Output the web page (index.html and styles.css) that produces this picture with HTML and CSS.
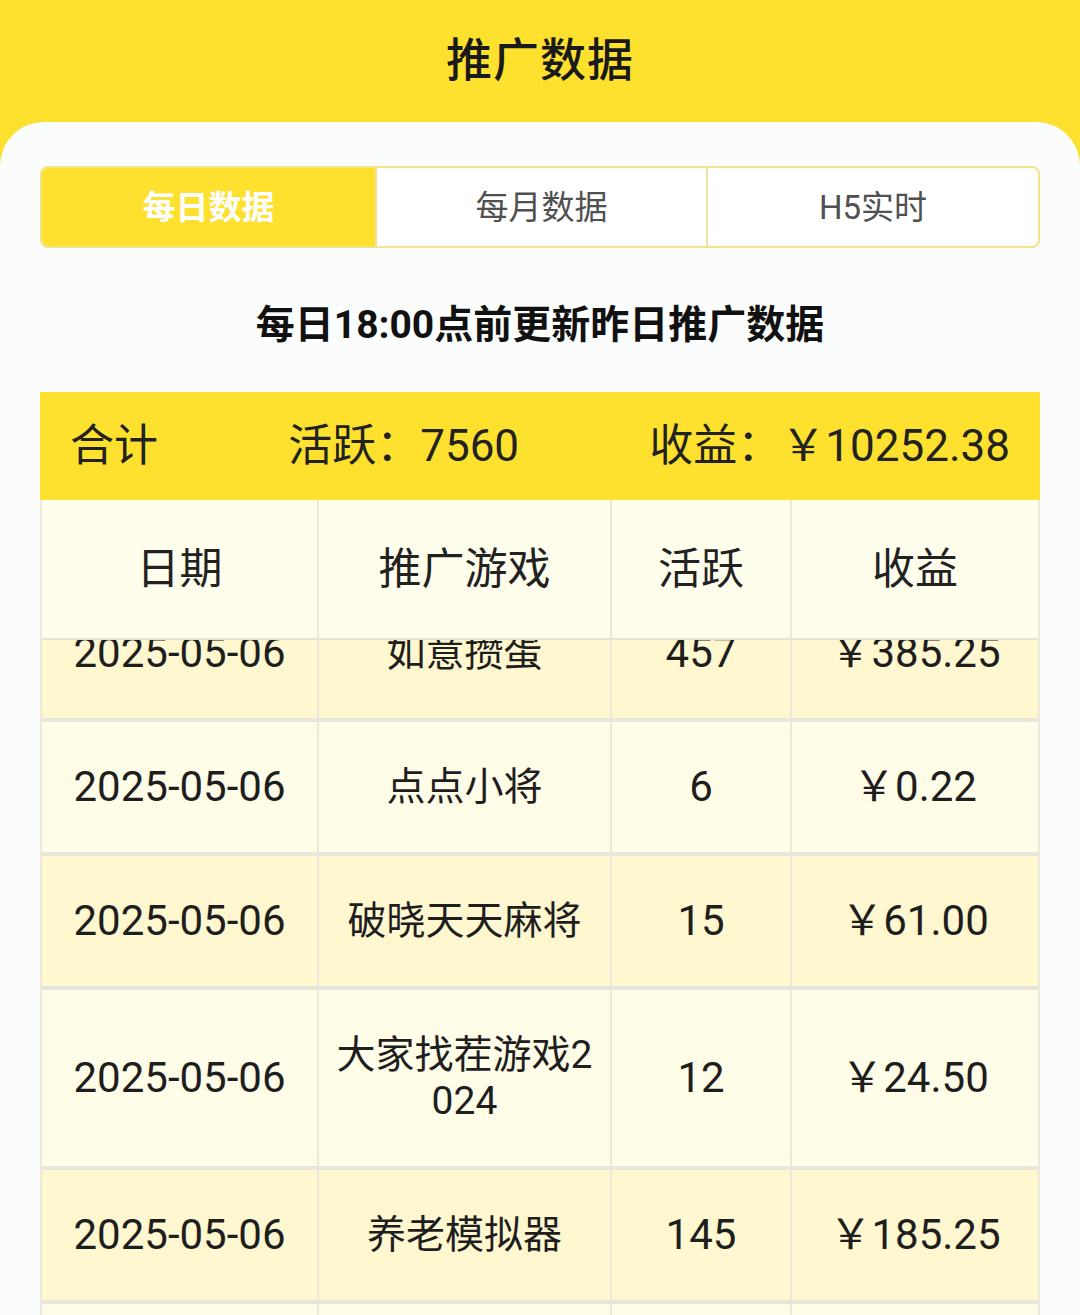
FILE: index.html
```html
<!DOCTYPE html>
<html lang="zh-CN">
<head>
<meta charset="utf-8">
<title>推广数据</title>
<link rel="stylesheet" href="styles.css">
</head>
<body>
<div class="page">
  <header class="topbar"><h1 class="title">推广数据</h1></header>
  <main class="card">
    <nav class="tabs">
      <div class="tab active">每日数据</div>
      <div class="tab">每月数据</div>
      <div class="tab">H5实时</div>
    </nav>
    <p class="notice">每日18:00点前更新昨日推广数据</p>
    <div class="summary">
      <span>合计</span>
      <span>活跃：7560</span>
      <span>收益：￥10252.38</span>
    </div>
    <div class="table">
      <div class="row thead">
        <div class="cell">日期</div>
        <div class="cell">推广游戏</div>
        <div class="cell">活跃</div>
        <div class="cell">收益</div>
      </div>
      <div class="tbody">
        <div class="rows">
          <div class="row odd">
            <div class="cell num">2025-05-06</div>
            <div class="cell">如意攒蛋</div>
            <div class="cell num">457</div>
            <div class="cell num">￥385.25</div>
          </div>
          <div class="row even">
            <div class="cell num">2025-05-06</div>
            <div class="cell">点点小将</div>
            <div class="cell num">6</div>
            <div class="cell num">￥0.22</div>
          </div>
          <div class="row odd">
            <div class="cell num">2025-05-06</div>
            <div class="cell">破晓天天麻将</div>
            <div class="cell num">15</div>
            <div class="cell num">￥61.00</div>
          </div>
          <div class="row even">
            <div class="cell num">2025-05-06</div>
            <div class="cell">大家找茬游戏2024</div>
            <div class="cell num">12</div>
            <div class="cell num">￥24.50</div>
          </div>
          <div class="row odd">
            <div class="cell num">2025-05-06</div>
            <div class="cell">养老模拟器</div>
            <div class="cell num">145</div>
            <div class="cell num">￥185.25</div>
          </div>
          <div class="row even">
            <div class="cell num">2025-05-06</div>
            <div class="cell">开心消消乐</div>
            <div class="cell num">32</div>
            <div class="cell num">￥40.10</div>
          </div>
        </div>
      </div>
    </div>
  </main>
</div>
</body>
</html>
```
FILE: styles.css
```css
html, body {
  margin: 0;
  padding: 0;
  height: 1315px;
  overflow: hidden;
}
body {
  background: #fee12f;
  font-family: Roboto, "Noto Sans CJK SC", sans-serif;
  color: #1e1e1e;
}
.page {
  display: flex;
  flex-direction: column;
  height: 1315px;
}
.topbar {
  height: 122px;
  box-sizing: border-box;
  padding-bottom: 10px;
  flex: none;
  display: flex;
  align-items: center;
  justify-content: center;
}
.title {
  margin: 0;
  font-size: 46px;
  font-weight: 500;
  color: #1a1a1a;
  letter-spacing: 1px;
}
.card {
  flex: 1;
  background: #fbfdfd;
  border-radius: 44px 44px 0 0;
  padding: 44px 40px 0;
  display: flex;
  flex-direction: column;
  overflow: hidden;
  min-height: 0;
}
.tabs {
  display: grid;
  grid-template-columns: 333px 331px 1fr;
  height: 82px;
  box-sizing: border-box;
  border: 2px solid #f3e48a;
  border-radius: 8px;
  overflow: hidden;
  background: #ffffff;
  flex: none;
}
.tab {
  display: flex;
  align-items: center;
  justify-content: center;
  padding-bottom: 5px;
  font-size: 33px;
  color: #505050;
  border-left: 2px solid #efe3a2;
}
.tab.active {
  background: #fee12f;
  color: #ffffff;
  font-weight: 700;
  border-left: none;
}
.notice {
  margin: 49px 0 39px;
  text-align: center;
  font-size: 39px;
  line-height: 56px;
  font-weight: 700;
  color: #111111;
  flex: none;
}
.summary {
  height: 108px;
  box-sizing: border-box;
  padding: 0 30px 8px;
  flex: none;
  background: #fee12f;
  display: flex;
  align-items: center;
  justify-content: space-between;
  font-size: 44px;
  color: #222222;
}
.table {
  flex: 1;
  min-height: 0;
  display: flex;
  flex-direction: column;
  border-left: 2px solid #ebe8dc;
  border-right: 2px solid #ebe8dc;
}
.row {
  display: grid;
  grid-template-columns: 275px 293px 180px 1fr;
}
.thead {
  height: 140px;
  box-sizing: border-box;
  background: #fffdeb;
  border-bottom: 2px solid #e6e3d6;
  flex: none;
}
.thead .cell {
  font-size: 43px;
  color: #222222;
}
.cell {
  display: flex;
  align-items: center;
  justify-content: center;
  text-align: center;
  word-break: break-all;
  border-left: 2px solid #ebe8da;
  font-size: 39px;
  line-height: 46px;
}
.cell:first-child {
  border-left: none;
}
.tbody {
  flex: 1;
  min-height: 0;
  overflow: hidden;
}
.rows {
  margin-top: -52px;
}
.rows .row {
  border-bottom: 4px solid #e8e5da;
}
.rows .cell {
  padding: 42px 12px;
  color: #1e1e1e;
}
.rows .cell.num {
  font-size: 42px;
}
.odd {
  background: #fff7cf;
}
.even {
  background: #fffce8;
}
```
